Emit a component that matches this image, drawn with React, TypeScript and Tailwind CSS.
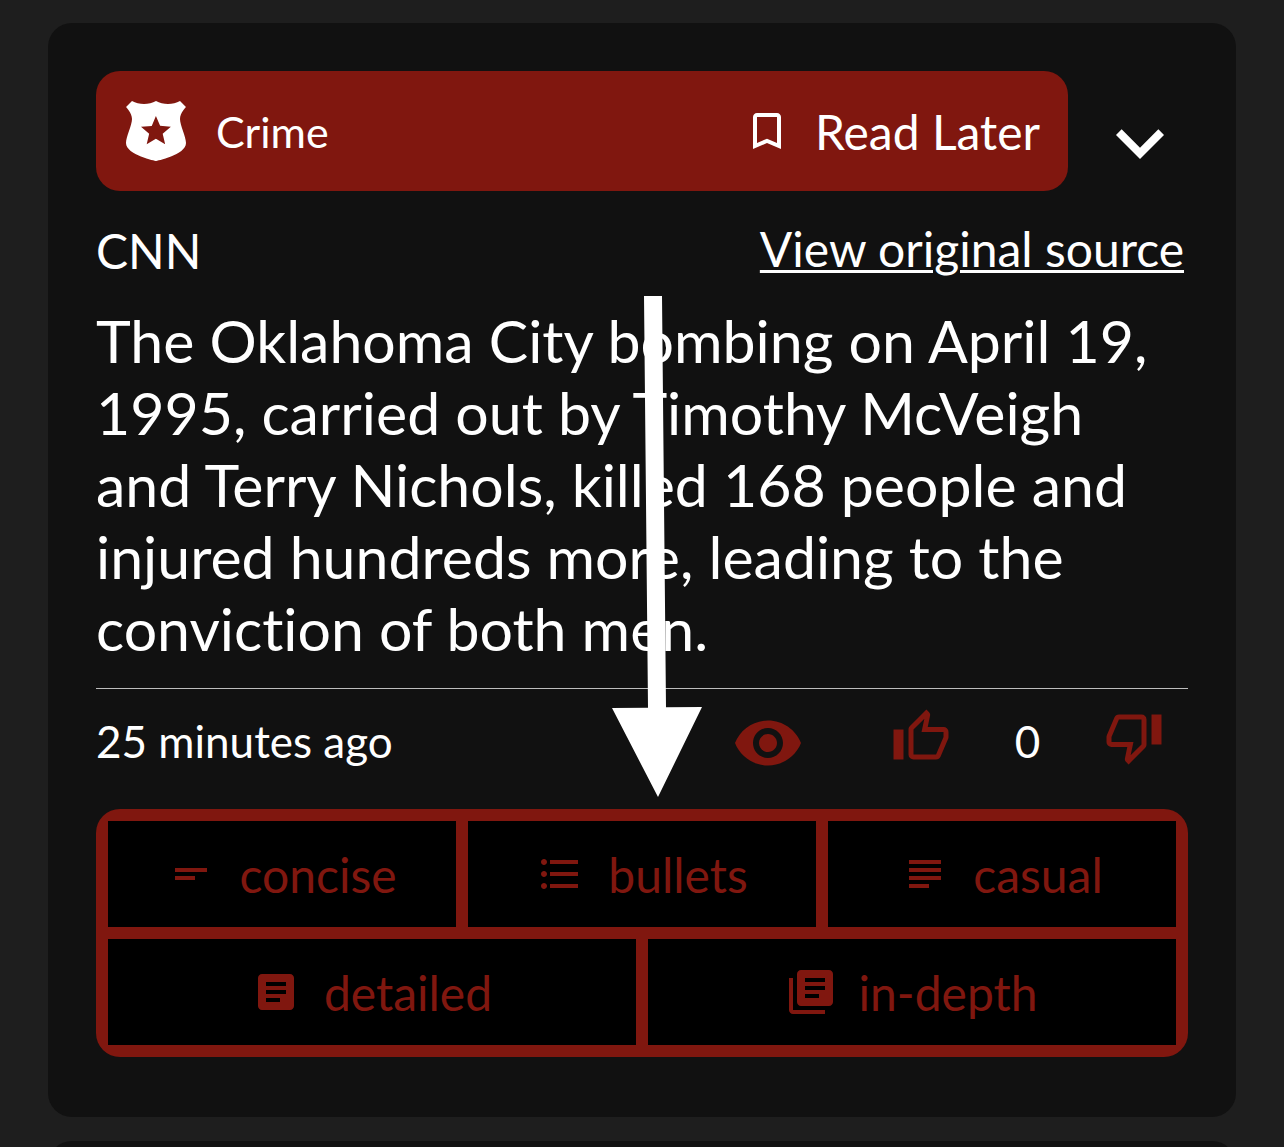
import React from "react";

const paths = {
  badge:
    "M22 4L20 2C18.85 2.64 17.4 3 16 3C14.6 3 13.14 2.63 12 2C10.86 2.63 9.4 3 8 3C6.6 3 5.15 2.64 4 2L2 4C2 4 4 6 4 8S2 14 2 16C2 20 12 22 12 22S22 20 22 16C22 14 20 10 20 8S22 4 22 4M15.05 16.45L11.97 14.59L8.9 16.45L9.72 12.95L7 10.61L10.58 10.3L11.97 7L13.37 10.29L16.95 10.6L14.23 12.94L15.05 16.45Z",
  bookmark:
    "M17 3H7c-1.1 0-2 .9-2 2v16l7-3 7 3V5c0-1.1-.9-2-2-2zm0 15l-5-2.18L7 18V5h10v13z",
  chevron: "M7.41 8.58L12 13.17L16.59 8.58L18 10L12 16L6 10Z",
  eye: "M12 4.5C7 4.5 2.73 7.61 1 12c1.73 4.39 6 7.5 11 7.5s9.27-3.11 11-7.5c-1.73-4.39-6-7.5-11-7.5zM12 17c-2.76 0-5-2.24-5-5s2.24-5 5-5 5 2.24 5 5-2.24 5-5 5zm0-8c-1.66 0-3 1.34-3 3s1.34 3 3 3 3-1.34 3-3-1.34-3-3-3z",
  thumbUp:
    "M5 9v12H1V9h4m4 12a2 2 0 0 1-2-2V9c0-.55.22-1.05.59-1.41L14.17 1l1.06 1.06c.27.27.44.64.44 1.05l-.03.32L14.69 8H21a2 2 0 0 1 2 2v2c0 .26-.05.5-.14.73l-3.02 7.05C19.54 20.5 18.83 21 18 21H9m0-2h9.03L21 12v-2h-8.79l1.13-5.32L9 9.03V19z",
  thumbDown:
    "M19 15V3h4v12h-4M15 3a2 2 0 0 1 2 2v10c0 .55-.22 1.05-.59 1.41L9.83 23l-1.06-1.06c-.27-.27-.44-.64-.44-1.06l.03-.31.95-4.57H3a2 2 0 0 1-2-2v-2c0-.26.05-.5.14-.73l3.02-7.05C4.46 3.5 5.17 3 6 3h9m0 2H5.97L3 12v2h8.78l-1.13 5.32L15 14.97V5z",
  concise: "M4 9h16v2H4V9zm0 4h10v2H4v-2z",
  bullets:
    "M4 10.5c-.83 0-1.5.67-1.5 1.5s.67 1.5 1.5 1.5 1.5-.67 1.5-1.5-.67-1.5-1.5-1.5zm0-6c-.83 0-1.5.67-1.5 1.5S3.17 7.5 4 7.5 5.5 6.83 5.5 6 4.83 4.5 4 4.5zm0 12c-.83 0-1.5.68-1.5 1.5s.68 1.5 1.5 1.5 1.5-.68 1.5-1.5-.67-1.5-1.5-1.5zM7 19h14v-2H7v2zm0-6h14v-2H7v2zm0-8v2h14V5H7z",
  casual: "M14 17H4v2h10v-2zm6-8H4v2h16V9zM4 15h16v-2H4v2zM4 5v2h16V5H4z",
  detailed:
    "M19 3H5c-1.1 0-2 .9-2 2v14c0 1.1.9 2 2 2h14c1.1 0 2-.9 2-2V5c0-1.1-.9-2-2-2zm-5 14H7v-2h7v2zm3-4H7v-2h10v2zm0-4H7V7h10v2z",
  inDepth:
    "M21 1H7c-1.1 0-2 .9-2 2v14c0 1.1.9 2 2 2h14c1.1 0 2-.9 2-2V3c0-1.1-.9-2-2-2zm-5 14H9v-2h7v2zm3-4H9V9h10v2zm0-4H9V5h10v2zM3 5H1v16c0 1.1.9 2 2 2h16v-2H3V5z",
};

function Icon({ name, className }: { name: keyof typeof paths; className: string }) {
  return (
    <svg viewBox="0 0 24 24" fill="currentColor" aria-hidden="true" className={className}>
      <path d={paths[name]} />
    </svg>
  );
}

function StyleButton({ icon, label }: { icon: keyof typeof paths; label: string }) {
  return (
    <button type="button" className="flex flex-1 items-center justify-center gap-6 bg-black py-6">
      <Icon name={icon} className="size-12 shrink-0" />
      <span className="pt-0.5 text-[48px] leading-[56px]">{label}</span>
    </button>
  );
}

export default function App() {
  return (
    <main className="flex h-screen flex-col gap-6 overflow-hidden bg-[#1e1e1e] px-12 pt-[23px] font-['Lato',sans-serif] text-white [font-variant-ligatures:none]">
      <article className="relative shrink-0 rounded-3xl bg-[#111111] px-12 pt-12 pb-[60px]">
        <header className="flex items-end gap-6">
          <div className="flex flex-1 items-center justify-between rounded-3xl bg-[#80170f] py-6 pr-7 pl-6">
            <div className="flex items-center gap-6">
              <Icon name="badge" className="size-[72px]" />
              <span className="pt-0.5 text-[43px] leading-[56px]">Crime</span>
            </div>
            <button type="button" className="flex items-center gap-6">
              <Icon name="bookmark" className="size-12" />
              <span className="pt-0.5 text-[48px] leading-[56px]">Read Later</span>
            </button>
          </div>
          <button type="button" aria-label="Expand story">
            <Icon name="chevron" className="size-24" />
          </button>
        </header>

        <div className="mt-5 flex items-center justify-between pr-1">
          <span className="pt-1 text-[48px] leading-[72px]">CNN</span>
          <a
            href="#source"
            className="text-[48px] leading-[72px] underline decoration-3 underline-offset-3"
          >
            View original source
          </a>
        </div>

        <h1 className="mt-[18px] text-[59px] leading-[72px]">
          The Oklahoma City bombing on April 19, 1995, carried out by Timothy McVeigh and Terry
          Nichols, killed 168 people and injured hundreds more, leading to the conviction of both
          men.
        </h1>

        <div className="mt-[23px] flex items-start border-t border-[#bdbdbd] pt-[18px]">
          <time className="flex-1 text-[44px] leading-[68px]">25 minutes ago</time>
          <div className="flex items-start text-[#80170f]">
            <button type="button" aria-label="Mark as viewed">
              <Icon name="eye" className="size-[72px]" />
            </button>
            <button type="button" aria-label="Like" className="ml-[87px]">
              <Icon name="thumbUp" className="size-[60px]" />
            </button>
            <span className="w-[153px] text-center text-[44px] leading-[68px] text-white">0</span>
            <button type="button" aria-label="Dislike" className="mr-6">
              <Icon name="thumbDown" className="size-[60px]" />
            </button>
          </div>
        </div>

        <div className="mt-[30px] flex flex-col gap-3 rounded-3xl bg-[#80170f] p-3 text-[#80170f]">
          <div className="flex gap-3">
            <StyleButton icon="concise" label="concise" />
            <StyleButton icon="bullets" label="bullets" />
            <StyleButton icon="casual" label="casual" />
          </div>
          <div className="flex gap-3">
            <StyleButton icon="detailed" label="detailed" />
            <StyleButton icon="inDepth" label="in-depth" />
          </div>
        </div>

        <svg
          viewBox="0 0 90 501"
          fill="currentColor"
          aria-hidden="true"
          className="pointer-events-none absolute top-[273px] left-1/2 -ml-[30px] h-[501px] w-[90px]"
        >
          <path d="M32 0H50L54 411.2L90 411L46 501L0 412L36 411.8Z" />
        </svg>
      </article>

      <article className="h-24 shrink-0 rounded-3xl bg-[#111111]" />
    </main>
  );
}
